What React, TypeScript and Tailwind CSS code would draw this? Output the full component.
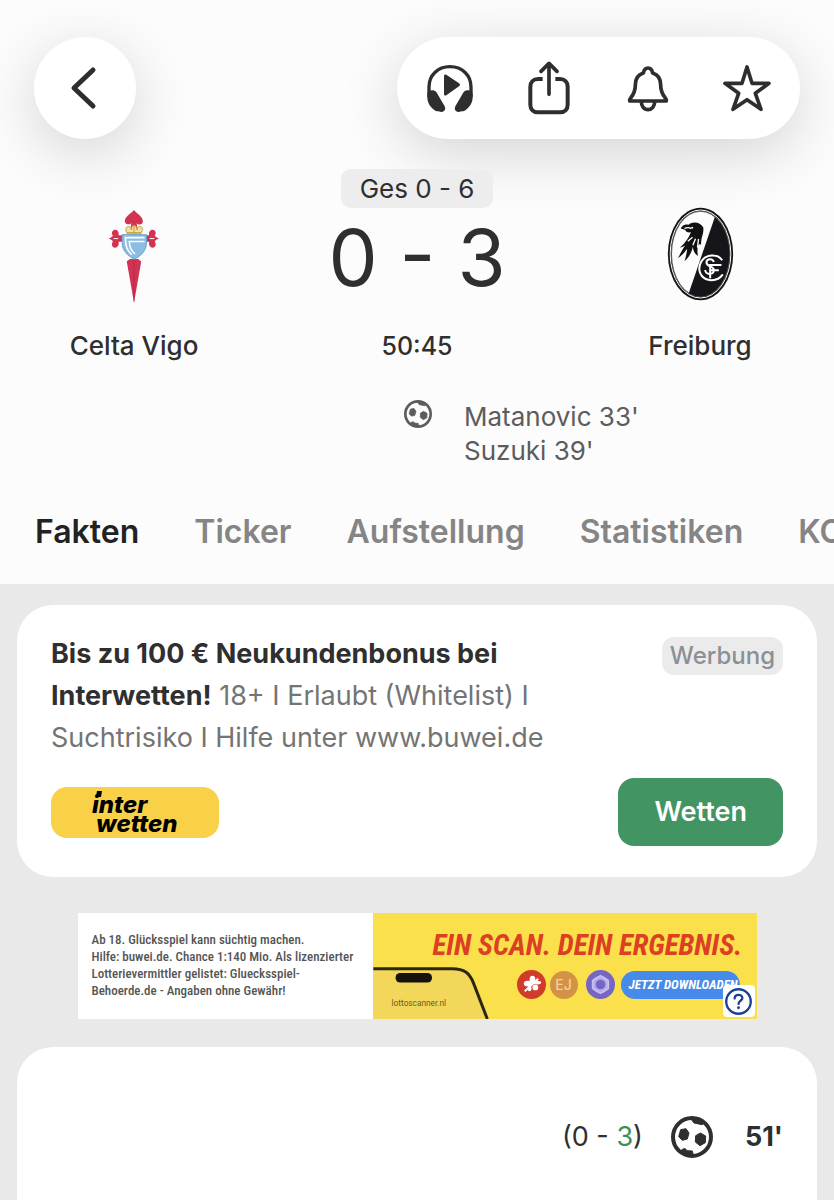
import React from "react";

function BackIcon() {
  return (
    <svg viewBox="0 0 28 46" className="h-[46px] w-7" fill="none" stroke="#2e2e2e" strokeWidth="5" strokeLinecap="round" strokeLinejoin="round" aria-hidden="true">
      <path d="M24 5 5 23l19 18" />
    </svg>
  );
}

function HeadphonesIcon() {
  return (
    <svg viewBox="78 98 144 150" className="h-[50px] w-12" fill="#2e2e2e" aria-hidden="true">
      <path d="M87 200v-30c0-35 26-61 63-61s63 26 63 61v30" fill="none" stroke="#2e2e2e" strokeWidth="10" />
      <path d="M132 137c0-4 3-6 7-4l38 26c4 3 4 7 0 9l-38 27c-4 2-7 0-7-4z" />
      <path d="M82 190c3-12 20-13 27-5l25 43c4 8 0 16-9 17-6 0-9-2-12-2-4 0-6-1-9-3-14-10-22-24-22-39z" />
      <path d="M218 190c-3-12-20-13-27-5l-25 43c-4 8 0 16 9 17 6 0 9-2 12-2 4 0 6-1 9-3 14-10 22-24 22-39z" />
    </svg>
  );
}

function ShareIcon() {
  return (
    <svg viewBox="377 94 144 162" className="h-[54px] w-12" fill="none" stroke="#2e2e2e" strokeWidth="12" aria-hidden="true">
      <path d="M430 148h-14c-14 0-23 9-23 23v54c0 14 9 23 23 23h66c14 0 23-9 23-23v-54c0-14-9-23-23-23h-14" />
      <path d="M449 194v-90M425 125l24-24 24 24" strokeWidth="11" strokeLinecap="round" strokeLinejoin="round" />
    </svg>
  );
}

function BellIcon() {
  return (
    <svg viewBox="76 98 144 150" className="h-[50px] w-12" fill="none" stroke="#2e2e2e" strokeWidth="11" strokeLinejoin="round" aria-hidden="true">
      <path d="M93 212c-1-4 0-6 3-9 9-11 14-22 14-39 0-19 7-31 24-36 2-9 5-15 14-15s12 6 14 15c17 5 24 17 24 36 0 17 5 28 14 39 3 3 4 5 3 9z" />
      <path d="M128 214c0 13 8 24 20 24s20-11 20-24" />
    </svg>
  );
}

function StarIcon() {
  return (
    <svg viewBox="369 98 144 150" className="h-[50px] w-12" fill="none" stroke="#2e2e2e" strokeWidth="11" strokeLinejoin="round" aria-hidden="true">
      <path d="m441 110 15 49h51l-41 30 17 48-42-29-42 29 17-48-41-30h51z" />
    </svg>
  );
}

function BallIcon({ className }: { className: string }) {
  return (
    <svg viewBox="0 0 126 126" className={className} fill="currentColor" stroke="currentColor" strokeLinejoin="round" aria-hidden="true">
      <circle cx="63" cy="63" r="57" fill="none" strokeWidth="12" />
      <g strokeWidth="3">
        <path d="m29 41 16-3 9 13-5 18-15 4-11-11z" />
        <path d="m88 51 16 9-1 20-16 9-14-11 1-19z" />
        <path d="M60 9h24l16 12-7 5-24-5-7-9z" />
        <path d="M27 108l8-9 8-1 5 6 16 1 3 13H48z" />
      </g>
    </svg>
  );
}

function CeltaCrest() {
  return (
    <svg viewBox="55 40 158 286" className="h-[94px] w-[52px]" role="img" aria-label="Celta Vigo">
      <g fill="#d23352">
        <path d="M134 43c7 11 27 19 27 34 0 10-13 13-19 6l3 18h-22l3-18c-7 7-20 3-20-6 0-15 20-23 28-34z" />
        <path d="M56 130c7-2 11-5 14-9-6-7-3-17 6-18 9 0 13 8 11 17h15v20H87c2 9-2 18-11 18-9-1-12-11-6-19-3-4-7-7-14-9z" />
        <path d="M211 130c-7-2-11-5-14-9 6-7 3-17-6-18-9 0-13 8-11 17h-15v20h15c-2 9 2 18 11 18 9-1 12-11 6-19 3-4 7-7 14-9z" />
        <path d="M112 200l9-8h26l9 8-22 125z" />
      </g>
      <path d="M72 130h14M182 130h14" stroke="#fcfcfc" strokeWidth="3" />
      <path d="M134 194v128" stroke="#a92643" strokeWidth="2" />
      <g fill="#f5dfa0" stroke="#c29a3d" strokeWidth="3">
        <path d="M114 116c-5-10-8-18 0-22 8-3 12 4 12 10 0-8 2-14 8-14s9 6 9 14c0-7 5-13 12-10 8 4 5 12-1 22z" />
        <path d="M113 112h42M134 88v28" fill="none" />
      </g>
      <path d="M98 118h74v24c0 25-16 40-37 51-21-11-37-26-37-51z" fill="#8bbce1" stroke="#6f9fcb" strokeWidth="3" />
      <path d="M166 127h-58c0 26 4 37 19 52M166 139h-46c0 17 4 25 17 38" fill="none" stroke="#fff" strokeWidth="5" />
    </svg>
  );
}

function FreiburgCrest() {
  return (
    <svg viewBox="50 36 200 282" className="h-[94px] w-[67px]" role="img" aria-label="Freiburg">
      <defs>
        <clipPath id="freiburg-shield">
          <ellipse cx="150" cy="177" rx="87" ry="128" />
        </clipPath>
      </defs>
      <ellipse cx="150" cy="177" rx="98" ry="139" fill="#151515" />
      <ellipse cx="150" cy="177" rx="88" ry="129" fill="#fdfdfd" />
      <g clipPath="url(#freiburg-shield)">
        <path d="M202 40 106 320h160V40z" fill="#16161a" />
      </g>
      <ellipse cx="150" cy="177" rx="91" ry="132" fill="none" stroke="#fff" strokeWidth="3" />
      <ellipse cx="150" cy="177" rx="87" ry="128" fill="none" stroke="#151515" strokeWidth="2" />
      <path d="M91 99c7-10 13-12 23-10 14-12 36-7 44 8 4 18-8 31-6 52-10-6-13 8-10 34-9-6-15-18-15-28-4 20-14 34-25 44 5-15 7-29 8-38-7 10-16 21-28 29 8-14 14-29 23-39-6 4-11 6-17 7 15-13 28-30 33-47-7 3-15 0-17-7-6-1-11 1-13-5z" fill="#111" />
      <path d="M102 100c8-3 16-3 20 1M112 139l14-12M127 151l8-20M141 158l3-26" fill="none" stroke="#fff" strokeWidth="4" />
      <circle cx="125" cy="98" r="3" fill="#fff" />
      <path d="M215 196c-14-22-51-18-63 4-13 24-2 52 25 55 17 2 31-4 40-17" fill="none" stroke="#fff" strokeWidth="6" />
      <path d="M190 201c-4-13-23-10-22 2 1 14 22 8 22 22 0 15-24 16-26 0M179 250v-40h34M179 226h26" fill="none" stroke="#fff" strokeWidth="6" />
    </svg>
  );
}

function InterwettenLogo() {
  return (
    <svg viewBox="0 0 168 51" className="h-[51px] w-[168px] rounded-2xl bg-[#f8d149]" role="img" aria-label="Interwetten" fontFamily="Inter, sans-serif" fontWeight="800" fontStyle="italic" fontSize="24">
      <text x="41" y="26">inter</text>
      <text x="45" y="45">wetten</text>
      <path d="M46 4h5l-1 6h-5z" />
    </svg>
  );
}

function PhoneArt() {
  return (
    <svg viewBox="24 186 360 160" className="h-[53px] w-[120px]" fill="none" aria-hidden="true">
      <path d="M24 194h238c36 0 52 13 64 43l42 109H24z" fill="#f2d75a" />
      <path d="M24 194h238c36 0 52 13 64 43l42 109" stroke="#2b260f" strokeWidth="9" />
      <rect x="91" y="207" width="110" height="29" rx="14" fill="#16130a" />
      <text x="79" y="307" fontSize="25" fontFamily="Roboto, sans-serif" fill="#6b5c20">lottoscanner.nl</text>
    </svg>
  );
}

function PromoBanner() {
  return (
    <aside aria-label="Anzeige" className="relative mx-auto mt-9 flex h-[106px] w-full max-w-[679px] overflow-hidden bg-[#fae04a]">
      <p className="w-[295px] shrink-0 whitespace-pre bg-white pl-3.5 pt-[18px] font-['Roboto_Condensed','Roboto',sans-serif] text-[13px] font-medium leading-[17px] text-[#555]">
        {"Ab 18. Glücksspiel kann süchtig machen.\nHilfe: buwei.de. Chance 1:140 Mio. Als lizenzierter\nLotterievermittler gelistet: Gluecksspiel-\nBehoerde.de - Angaben ohne Gewähr!"}
      </p>
      <div className="flex min-w-0 flex-1 flex-col justify-between">
        <p className="whitespace-nowrap pr-3.5 pt-4 text-right font-['Roboto_Condensed','Roboto',sans-serif] text-[29px] font-bold italic leading-8 text-[#dc3f24]">EIN SCAN. DEIN ERGEBNIS.</p>
        <div className="flex items-end">
          <PhoneArt />
          <div className="mb-5 ml-6 flex items-center gap-1">
            <svg viewBox="0 0 30 30" className="size-[29px]" aria-hidden="true">
              <circle cx="15" cy="15" r="15" fill="#d13b2c" />
              <g fill="#fff">
                <ellipse cx="11" cy="14" rx="4" ry="3" />
                <ellipse cx="16" cy="10" rx="3" ry="4" />
                <ellipse cx="21" cy="13" rx="4" ry="2" />
                <ellipse cx="19" cy="18" rx="3" ry="3" />
                <ellipse cx="13" cy="19" rx="2" ry="3" />
              </g>
              <path d="m8 22 14-13" stroke="#fff" strokeWidth="2" />
            </svg>
            <span className="grid size-7 place-items-center rounded-full bg-[#d49245] text-sm font-medium text-[#f5cf9c]">EJ</span>
            <svg viewBox="0 0 30 30" className="ml-1 size-[29px]" fill="none" aria-hidden="true">
              <circle cx="15" cy="15" r="15" fill="#7565c4" />
              <circle cx="15" cy="15" r="7" stroke="#b5a9ea" strokeWidth="4" />
              <path d="m15 6 8 5v8l-8 5-8-5v-8z" stroke="#c6bdf0" strokeWidth="2" />
            </svg>
          </div>
          <a href="#download" className="mb-5 ml-1.5 flex h-7 w-[119px] items-center whitespace-nowrap rounded-full bg-[#468bea] pl-2 font-['Roboto_Condensed','Roboto',sans-serif] text-[13px] font-bold italic text-white">JETZT DOWNLOADEN</a>
        </div>
      </div>
      <button aria-label="Informationen zur Anzeige" className="absolute bottom-0.5 right-0.5 grid size-8 place-items-center rounded bg-white">
        <svg viewBox="0 0 30 30" className="size-[29px]" fill="none" stroke="#1c4194" strokeWidth="2.4" aria-hidden="true">
          <circle cx="15" cy="15" r="12.7" />
          <path d="M11 12c0-5 8-5 8-.5 0 3-4 2.500-4 6" strokeLinecap="round" />
          <circle cx="15" cy="21.500" r="1.500" fill="#1c4194" stroke="none" />
        </svg>
      </button>
    </aside>
  );
}

const tabs = ["Fakten", "Ticker", "Aufstellung", "Statistiken", "KO"];

export default function App() {
  return (
    <div className="flex min-h-screen flex-col overflow-x-hidden bg-[#e9e9e9] font-['Inter',sans-serif] text-[#2f2f2f]">
      <header className="bg-[#fcfcfc] pb-7">
        <div className="flex items-center justify-between px-[34px] pt-[37px]">
          <button aria-label="Zurück" className="grid size-[102px] place-items-center rounded-full bg-white pr-1 shadow-[0_14px_60px_rgba(0,0,0,0.16)]">
            <BackIcon />
          </button>
          <div className="grid h-[102px] w-[403px] grid-cols-4 rounded-full bg-white px-1 shadow-[0_14px_60px_rgba(0,0,0,0.16)]">
            <button aria-label="Audio" className="grid place-items-center"><HeadphonesIcon /></button>
            <button aria-label="Teilen" className="grid place-items-center"><ShareIcon /></button>
            <button aria-label="Benachrichtigungen" className="grid place-items-center"><BellIcon /></button>
            <button aria-label="Favorit" className="grid place-items-center"><StarIcon /></button>
          </div>
        </div>

        <div className="mt-[30px] grid grid-cols-[200px_1fr_200px] px-[34px] text-[26px] font-medium leading-9">
          <div className="flex flex-col items-center justify-between pt-10">
            <CeltaCrest />
            <span>Celta Vigo</span>
          </div>
          <div className="flex flex-col items-center">
            <span className="relative rounded-[10px] bg-[#ededed] px-[19px] py-0.5 font-normal leading-[35px]">Ges 0 - 6</span>
            <span className="mt-2.5 text-[78px] font-normal leading-[80px]">0 - 3</span>
            <span className="mt-[30px] text-[25px]">50:45</span>
          </div>
          <div className="flex flex-col items-center justify-between pt-[38px]">
            <FreiburgCrest />
            <span>Freiburg</span>
          </div>
        </div>

        <div className="mt-9 flex pl-[404px] text-[#5c5c5c]">
          <BallIcon className="size-7" />
          <ul className="ml-8 text-[26px] leading-[34px]">
            <li>Matanovic 33'</li>
            <li>Suzuki 39'</li>
          </ul>
        </div>

        <nav className="mt-10 flex gap-[55px] overflow-hidden whitespace-nowrap pl-[35px] text-[32px] font-semibold leading-[48px]">
          {tabs.map((tab, index) => (
            <a key={tab} href={`#${tab}`} className={index === 0 ? "text-[#222]" : "text-[#858585]"}>{tab}</a>
          ))}
        </nav>
      </header>

      <main className="flex flex-1 flex-col px-[17px] pt-[21px]">
        <section className="rounded-[36px] bg-white px-[34px] pb-[31px] pt-7">
          <div className="flex items-start justify-between">
            <p className="max-w-[520px] text-[27px] leading-[42px] text-[#747474]">
              <strong className="font-bold text-[#2f2f2f]">Bis zu 100 € Neukundenbonus bei Interwetten!</strong> 18+ I Erlaubt (Whitelist) I Suchtrisiko I Hilfe unter www.buwei.de
            </p>
            <span className="mt-1 rounded-xl bg-[#ebebeb] px-2 text-2xl font-medium leading-[38px] text-[#8b9096]">Werbung</span>
          </div>
          <div className="mt-[19px] flex items-center justify-between">
            <InterwettenLogo />
            <button className="h-[68px] rounded-2xl bg-[#429562] px-9 text-[27px] font-semibold text-white">Wetten</button>
          </div>
        </section>

        <PromoBanner />

        <section className="mt-7 flex-1 rounded-t-[36px] bg-white px-[34px] pt-[69px]">
          <div className="flex items-center justify-end text-[27px] leading-[42px]">
            <span>(0 - <span className="text-[#36915b]">3</span>)</span>
            <BallIcon className="ml-7 size-[42px]" />
            <span className="ml-8 font-bold">51'</span>
          </div>
        </section>
      </main>
    </div>
  );
}
